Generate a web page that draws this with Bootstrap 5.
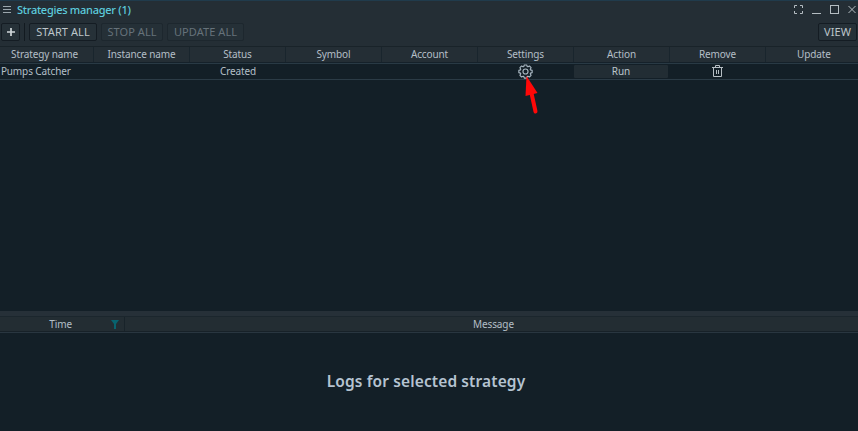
<!DOCTYPE html>
<html lang="en">
<head>
<meta charset="utf-8">
<title>Strategies manager</title>
<link href="https://cdn.jsdelivr.net/npm/bootstrap@5.3.0/dist/css/bootstrap.min.css" rel="stylesheet">
<style>
body{width:858px;height:431px;background:#131f27;color:#b4bfc7;font:10px/16px "Noto Sans","Open Sans",sans-serif;letter-spacing:-.12px}
svg{display:block;flex:none}
.topbar{background:#242e35;border-top:1px solid #203b4c}
.titlebar{height:19px;padding-left:3px;padding-right:1px;padding-bottom:2px}
.title-text{color:#5dcbdc;font-size:11px;font-weight:500;letter-spacing:-.27px;margin-left:6px}
.window-tools{gap:6px}
.toolbar-row{height:26px;padding:3px 1px 5px 1px}
.tool{height:18px;border:1px solid #141c23;border-radius:2px;background:#263138;color:#bdc5ca;font-size:11px;line-height:16px;padding:0;letter-spacing:.08px}
.tool:disabled{background:#253037;color:#66727a;border-color:#1d272e;opacity:1}
.tool-add{width:19px}.tool-start{width:68px}.tool-stop{width:62px}.tool-update{width:77px}.tool-view{width:39px}
.divider{width:1px;height:18px;background:#121a20;margin:0 4px}
.strategy-grid{display:grid;grid-template-columns:94px repeat(8,96px);overflow:hidden}
.strategy-grid>*{text-align:center;height:16px;line-height:15px}
.head-row{background:#242e35;border-top:1px solid #192329;border-bottom:1px solid #15212a;height:17px}
.head-row>*{border-right:1px solid #19252d}
.head-row>:first-child{padding-right:4px}
.head-row>:last-child{padding-left:1px}
.data-row{height:17px;border-top:1px solid #293a45;border-bottom:1px solid #2b3b46}
.data-row>*{line-height:15px}
.run{background:#222d34;border:0;color:#bbc5cc;height:13px!important;line-height:13px!important;width:94px;margin-top:1px;padding:0;border-radius:1px}
.icon-cell{padding-right:1px}
.log-area{height:120px}
.log-top{height:6px;background:#263038;border-bottom:1px solid #1b262d}
.log-head{height:15px;background:#232d33;border-bottom:1px solid #172128;line-height:15px}
.log-time{width:125px;border-right:1px solid #18232a;padding-right:5px}
.log-time .time-label{width:72px;text-align:right}
.log-message{padding-left:4px}
.log-rule{height:1px;background:#293640}
.log-title{font-size:15.5px;line-height:22px;font-weight:600;color:#b5c3d1;margin-top:37px;letter-spacing:.12px;padding-right:6px}
.pointer{position:absolute;left:523px;top:75px}
</style>
<script src="https://cdn.jsdelivr.net/npm/bootstrap@5.3.0/dist/js/bootstrap.bundle.min.js"></script>
</head>
<body class="d-flex flex-column overflow-hidden m-0 position-relative">
<header class="topbar">
 <div class="titlebar d-flex align-items-center">
  <svg width="8" height="9" stroke="#9ca7ad"><path d="M0 1.5h8M0 4.5h8M0 7.5h8"/></svg>
  <span class="title-text text-nowrap">Strategies manager (1)</span>
  <div class="window-tools d-flex ms-auto">
   <svg width="12" height="11" fill="none" stroke="#b4bdc2"><path d="M.5 4V1.500H3M6 1.500h2.500V4M8.500 7v2.500H6M3 9.500H.5V7"/></svg>
   <svg width="12" height="11" stroke="#b4bdc2"><path d="M0 9.500h9"/></svg>
   <svg width="12" height="11" fill="none" stroke="#b4bdc2"><rect x=".5" y="1.500" width="8" height="8"/></svg>
   <svg width="9" height="11" fill="none" stroke="#b4bdc2"><path d="m.5 2 7 7M7.500 2l-7 7"/></svg>
  </div>
 </div>
 <div class="toolbar-row d-flex">
  <button class="tool tool-add d-flex align-items-center justify-content-center" aria-label="Add"><svg width="8" height="8" stroke="#d0d6d9" stroke-width="1.700"><path d="M0 4h8M4 0v8"/></svg></button>
  <span class="divider"></span>
  <button class="tool tool-start"><span>START ALL</span></button>
  <button class="tool tool-stop ms-1" disabled><span>STOP ALL</span></button>
  <button class="tool tool-update ms-1" disabled><span>UPDATE ALL</span></button>
  <button class="tool tool-view ms-auto"><span>VIEW</span></button>
 </div>
</header>
<main class="flex-fill">
 <div class="strategy-grid head-row"><div>Strategy name</div><div>Instance name</div><div>Status</div><div>Symbol</div><div>Account</div><div>Settings</div><div>Action</div><div>Remove</div><div>Update</div></div>
 <div class="strategy-grid data-row"><div class="text-start ps-0 text-nowrap">&#8202;Pumps Catcher</div><div></div><div>Created</div><div></div><div></div>
  <div class="icon-cell d-flex justify-content-center"><svg width="15" height="15" viewBox="0 0 16 16" fill="none" stroke="#a9b7c2" stroke-width="1.200" stroke-linejoin="round"><path d="M6.700 1h2.600l.5 1.700.8.350 1.600-.9 1.750 1.750-.9 1.600.35.8 1.700.5v2.400l-1.700.5-.35.8.9 1.600-1.750 1.750-1.600-.9-.8.350-.5 1.700H6.700l-.5-1.700-.8-.35-1.600.9-1.750-1.750.9-1.600-.35-.8-1.700-.5V6.800l1.700-.5.350-.8-.9-1.600L3.800 2.150l1.600.9.800-.35z"/><circle cx="8" cy="8" r="2.700"/></svg></div>
  <button class="run">Run</button>
  <div class="icon-cell d-flex justify-content-center"><svg width="11" height="15" fill="none" stroke="#b6bec4"><path d="M0 3.500h11M3.500 3V1.500h4V3M1.500 4v8.500h8V4M4.500 6v4M6.500 6v4"/></svg></div><div></div>
 </div>
</main>
<section class="log-area">
 <div class="log-top"></div>
 <div class="log-head d-flex"><div class="log-time d-flex align-items-center"><span class="time-label">Time</span><svg class="ms-auto" width="8" height="9" fill="#08626e"><path d="M0 0h8L5 4v5H3V4z"/></svg></div><div class="log-message flex-fill text-center">Message</div></div>
 <div class="log-rule"></div>
 <div class="log-title text-center"><span>Logs for selected strategy</span></div>
</section>
<svg class="pointer" width="17" height="41"><path d="M3.500 1 14.500 18 2.500 21z" fill="#ff0808"/><path d="m8 16 4.500 20.500" stroke="#ff0808" stroke-width="4" stroke-linecap="round"/></svg>
</body>
</html>
